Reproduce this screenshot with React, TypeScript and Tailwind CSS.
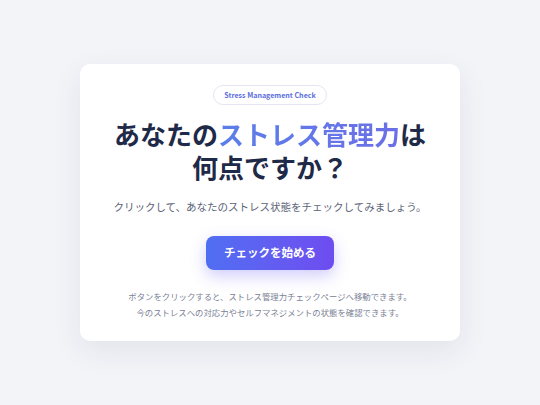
export default function App() {
  return (
    <div
      className="flex h-[405px] w-full items-center justify-center bg-[#f3f4f8]"
      style={{ fontFamily: '"Noto Sans CJK JP", "Noto Sans", sans-serif' }}
    >
      <div className="flex w-[380px] flex-col items-center rounded-[10px] bg-white px-6 pt-[21px] pb-[21px] text-center shadow-[0_10px_30px_rgba(30,40,80,0.08)]">
        <span className="flex h-[20px] items-center rounded-full border border-[#e3e6f2] px-[10px] text-[7.1px] font-bold text-[#5b6ee0]">
          Stress Management Check
        </span>
        <h1 className="mt-[12px] text-[26px] leading-[33px] font-bold text-[#1f2a48]">
          あなたの
          <span className="bg-gradient-to-r from-[#5a7fea] to-[#6b6fe6] bg-clip-text text-transparent">
            ストレス管理力
          </span>
          は
          <br />
          何点ですか？
        </h1>
        <p className="mt-[16px] text-[10.5px] leading-[16px] text-[#5b6377]">
          クリックして、あなたのストレス状態をチェックしてみましょう。
        </p>
        <button className="mt-[21px] flex h-[34px] w-[128px] items-center justify-center rounded-[8px] bg-gradient-to-r from-[#4f6ef2] to-[#6e4cf0] text-[11.5px] font-bold text-white shadow-[0_6px_16px_rgba(100,90,240,0.3)]">
          チェックを始める
        </button>
        <p className="mt-[18px] text-[8.4px] leading-[16px] text-[#7b8295]">
          ボタンをクリックすると、ストレス管理力チェックページへ移動できます。
          <br />
          今のストレスへの対応力やセルフマネジメントの状態を確認できます。
        </p>
      </div>
    </div>
  );
}
